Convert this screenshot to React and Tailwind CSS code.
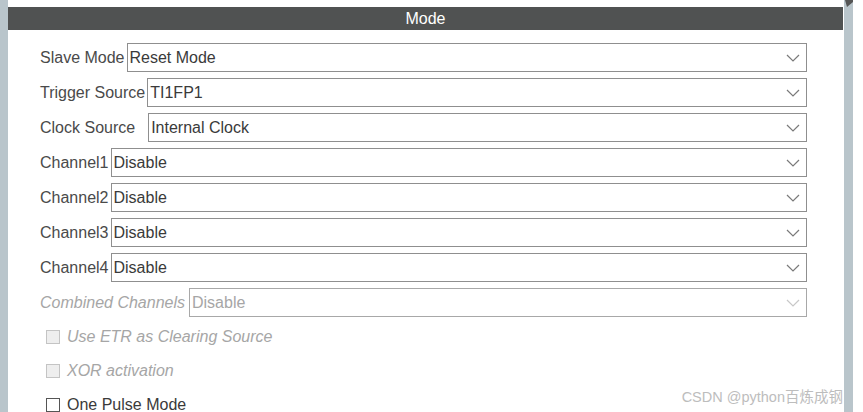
import React from 'react';

const font = { fontFamily: '"Liberation Sans", Arial, sans-serif' };

const Chevron = ({ disabled }) => (
  <svg width="14" height="8" viewBox="0 0 14 8" className="shrink-0">
    <path
      d="M1 1 L7 7 L13 1"
      fill="none"
      stroke={disabled ? '#c8c8c8' : '#7a7a7a'}
      strokeWidth="1.2"
    />
  </svg>
);

const SelectRow = ({ label, value, gap = 'ml-[2px]', disabled = false }) => (
  <div className="flex items-center h-[35px] pl-[32px] pr-[36px]">
    <span
      className={`text-[16px] whitespace-nowrap ${
        disabled ? 'italic text-[#a6a6a6]' : 'text-[#4a4a4a]'
      }`}
    >
      {label}
    </span>
    <div
      className={`${gap} flex-1 h-[29px] flex items-center justify-between border bg-white pl-[2px] pr-[6px] ${
        disabled ? 'border-[#a8a8a8]' : 'border-[#8f8f8f]'
      }`}
    >
      <span
        className={`text-[16px] ${disabled ? 'text-[#a6a6a6]' : 'text-[#3a3a3a]'}`}
      >
        {value}
      </span>
      <Chevron disabled={disabled} />
    </div>
  </div>
);

const CheckRow = ({ label, disabled = false }) => (
  <div className="flex items-center h-[34px] pl-[38px]">
    <div
      className={`w-[14px] h-[14px] border ${
        disabled ? 'bg-[#eeeeee] border-[#c4c4c4]' : 'bg-white border-[#555555]'
      }`}
    />
    <span
      className={`ml-[7px] text-[16px] ${
        disabled ? 'italic text-[#a6a6a6]' : 'text-[#3a3a3a]'
      }`}
    >
      {label}
    </span>
  </div>
);

export default function App() {
  return (
    <div className="relative w-[863px] h-[412px] overflow-hidden bg-white flex" style={font}>
      <div className="w-[8px] h-full bg-[#b9c5cb]" />
      <div className="w-[835px] h-full">
        <div className="mt-[7px] h-[23px] bg-[#505252] flex items-center justify-center">
          <span className="text-white text-[16px]">Mode</span>
        </div>
        <div className="pt-[10px]">
          <SelectRow label="Slave Mode" value="Reset Mode" />
          <SelectRow label="Trigger Source" value="TI1FP1" />
          <SelectRow label="Clock Source" value="Internal Clock" gap="ml-[13px]" />
          <SelectRow label="Channel1" value="Disable" />
          <SelectRow label="Channel2" value="Disable" />
          <SelectRow label="Channel3" value="Disable" />
          <SelectRow label="Channel4" value="Disable" />
          <SelectRow label="Combined Channels" value="Disable" gap="ml-[4px]" disabled />
          <CheckRow label="Use ETR as Clearing Source" disabled />
          <CheckRow label="XOR activation" disabled />
          <CheckRow label="One Pulse Mode" />
        </div>
      </div>
      <div className="ml-[1px] w-[9px] h-full bg-[#b9c5cb] relative">
        <svg width="9" height="8" viewBox="0 0 9 8" className="absolute top-0 left-0">
          <polygon points="1,0 9,0 9,2 3,7" fill="#555555" />
        </svg>
      </div>
      <div className="flex-1 h-full bg-white" />
      <div
        className="absolute right-[20px] top-[387px] text-[14.5px] text-[#bdbdbd] whitespace-nowrap"
        style={{ fontFamily: '"Liberation Sans", "Noto Sans CJK SC", sans-serif' }}
      >
        CSDN @python百炼成钢
      </div>
    </div>
  );
}
